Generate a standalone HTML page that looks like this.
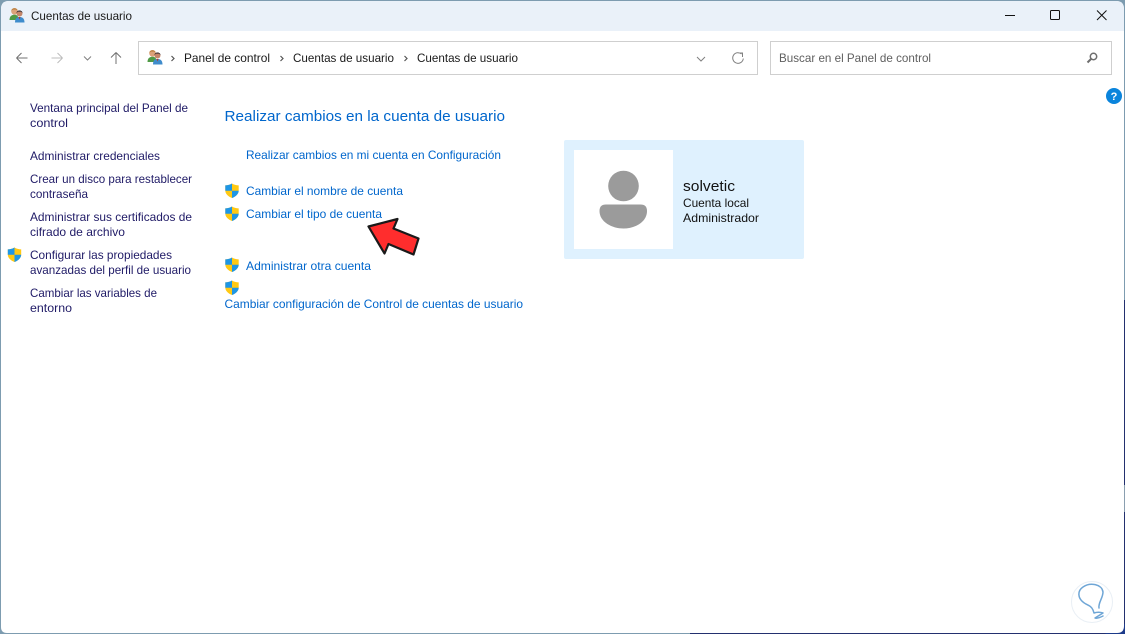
<!DOCTYPE html>
<html lang="es">
<head>
<meta charset="utf-8">
<title>Cuentas de usuario</title>
<style>
html,body{margin:0;padding:0;width:1125px;height:634px;overflow:hidden;background:#fff}
svg{display:block;position:absolute;left:0;top:0}
text{font-family:"Liberation Sans",sans-serif;font-size:12px}
.t{fill:#1a1a1a}
.s{fill:#1f1a66}
.l{fill:#0066cc}
</style>
</head>
<body>
<svg width="1125" height="634" viewBox="0 0 1125 634" xmlns="http://www.w3.org/2000/svg">
<defs>
<g id="shield">
<path d="M7.5 0.500 C5.500 1.800 3 2.400 0.800 2.400 V7.500 C0.800 11 3.800 13.500 7.500 15 C11.200 13.500 14.200 11 14.200 7.500 V2.400 C12 2.400 9.500 1.800 7.500 0.500Z" fill="#ffc914"/>
<path d="M7.500 0.500 C5.500 1.800 3 2.400 0.800 2.400 V7.700 H7.500Z" fill="#1e96e6"/>
<path d="M7.500 7.700 H14.200 C14 11 11.200 13.500 7.500 15Z" fill="#1e96e6"/>
</g>
<g id="users">
<circle cx="5.500" cy="4.300" r="3.300" fill="#dca27a"/>
<path d="M2.300 3.800 C2.500 0.400 8.500 0.400 8.700 3.800 L7 2.600 H4Z" fill="#b9803f"/>
<path d="M0.500 13 C0.500 9 3 7.800 5.500 7.800 C8 7.800 9.500 9 9.500 13Z" fill="#4f9a45"/>
<circle cx="10.500" cy="6.500" r="3" fill="#c4866a"/>
<path d="M7.500 6 C7.600 2.700 13.400 2.700 13.500 6 L12 4.600 H9Z" fill="#30282c"/>
<path d="M6 15.500 C6 11 8 10 10.500 10 C13 10 15.500 11 15.500 15.500Z" fill="#3f8ccc"/>
<path d="M9.500 10 L10.500 12.500 L11.500 10Z" fill="#b8392b"/>
</g>
</defs>

<!-- window frame -->
<rect x="0" y="0" width="1125" height="634" fill="#7d9cb0"/>
<rect x="1124" y="300" width="1" height="334" fill="#23306f"/>
<rect x="1124" y="485" width="1" height="27" fill="#8a9fb0"/>
<rect x="690" y="633" width="435" height="1" fill="#23306f"/>
<path d="M1115 624 H1125 V634 H1105 Z" fill="#1c3a8a"/>
<path d="M9 1 H1116 Q1124 1 1124 9 V626 Q1124 633 1117 633 H7 Q1 633 1 627 V9 Q1 1 9 1Z" fill="#fff"/>
<path d="M9 1 H1116 Q1124 1 1124 9 V31 H1 V9 Q1 1 9 1Z" fill="#eaf1f9"/>

<!-- title bar -->
<use href="#users" x="9" y="7"/>
<text x="31" y="20" class="t" textLength="101" lengthAdjust="spacingAndGlyphs">Cuentas de usuario</text>
<path d="M1005 15.500 H1015" stroke="#111" stroke-width="1" fill="none"/>
<rect x="1050.500" y="10.500" width="9" height="9" rx="1" stroke="#111" stroke-width="1" fill="none"/>
<path d="M1097 10.500 L1106.500 20 M1106.500 10.500 L1097 20" stroke="#111" stroke-width="1" fill="none"/>

<!-- nav -->
<path d="M16.500 58 H27.500 M16.500 58 L21.500 53 M16.500 58 L21.500 63" stroke="#707070" stroke-width="1" fill="none"/>
<path d="M62.500 58 H51.500 M62.500 58 L57.500 53 M62.500 58 L57.500 63" stroke="#bcbcbc" stroke-width="1" fill="none"/>
<path d="M84 56.500 L87.500 60 L91 56.500" stroke="#808080" stroke-width="1" fill="none"/>
<path d="M116 64 V52.500 M116 52.500 L111 57.500 M116 52.500 L121 57.500" stroke="#707070" stroke-width="1" fill="none"/>

<!-- address -->
<rect x="138.500" y="41.500" width="619" height="33" fill="#fff" stroke="#cfcfcf"/>
<use href="#users" x="147" y="49"/>
<path d="M171.500 56 L174 58.500 L171.500 61" stroke="#555" stroke-width="1.200" fill="none"/>
<text x="184" y="62" class="t" textLength="86" lengthAdjust="spacingAndGlyphs">Panel de control</text>
<path d="M280.500 56 L283 58.500 L280.500 61" stroke="#555" stroke-width="1.200" fill="none"/>
<text x="293" y="62" class="t" textLength="101" lengthAdjust="spacingAndGlyphs">Cuentas de usuario</text>
<path d="M404.500 56 L407 58.500 L404.500 61" stroke="#555" stroke-width="1.200" fill="none"/>
<text x="417" y="62" class="t" textLength="101" lengthAdjust="spacingAndGlyphs">Cuentas de usuario</text>
<path d="M697 57 L701 61 L705 57" stroke="#808080" fill="none"/>
<path d="M741.500 54 A5.300 5.300 0 1 0 743.300 58.500 M738.500 53 H742.500 V57" stroke="#808080" stroke-width="1" fill="none"/>

<!-- search -->
<rect x="770.500" y="41.500" width="341" height="33" fill="#fff" stroke="#cfcfcf"/>
<text x="779" y="62" fill="#5f5f5f" textLength="152" lengthAdjust="spacingAndGlyphs">Buscar en el Panel de control</text>
<circle cx="1093.500" cy="56.500" r="3.200" stroke="#6e6e6e" stroke-width="1.500" fill="none"/>
<path d="M1091 59 L1087.500 62.500" stroke="#6e6e6e" stroke-width="2" fill="none"/>

<!-- help -->
<circle cx="1114" cy="96" r="8" fill="#0a84dc"/>
<text x="1114" y="100" text-anchor="middle" fill="#fff" style="font-size:11px;font-weight:bold">?</text>

<!-- sidebar -->
<text x="30" y="112" class="s" textLength="158" lengthAdjust="spacingAndGlyphs">Ventana principal del Panel de</text>
<text x="30" y="127" class="s" textLength="38" lengthAdjust="spacingAndGlyphs">control</text>
<text x="30" y="160" class="s" textLength="130" lengthAdjust="spacingAndGlyphs">Administrar credenciales</text>
<text x="30" y="183" class="s" textLength="162" lengthAdjust="spacingAndGlyphs">Crear un disco para restablecer</text>
<text x="30" y="198" class="s" textLength="58" lengthAdjust="spacingAndGlyphs">contraseña</text>
<text x="30" y="221" class="s" textLength="162" lengthAdjust="spacingAndGlyphs">Administrar sus certificados de</text>
<text x="30" y="236" class="s" textLength="95" lengthAdjust="spacingAndGlyphs">cifrado de archivo</text>
<use href="#shield" x="7" y="247"/>
<text x="30" y="259" class="s" textLength="142" lengthAdjust="spacingAndGlyphs">Configurar las propiedades</text>
<text x="30" y="274" class="s" textLength="161" lengthAdjust="spacingAndGlyphs">avanzadas del perfil de usuario</text>
<text x="30" y="297" class="s" textLength="127" lengthAdjust="spacingAndGlyphs">Cambiar las variables de</text>
<text x="30" y="312" class="s" textLength="42" lengthAdjust="spacingAndGlyphs">entorno</text>

<!-- main -->
<text x="224.500" y="121" class="l" style="font-size:15px" textLength="280.500" lengthAdjust="spacingAndGlyphs">Realizar cambios en la cuenta de usuario</text>
<text x="246" y="159" class="l" textLength="255" lengthAdjust="spacingAndGlyphs">Realizar cambios en mi cuenta en Configuración</text>
<use href="#shield" x="224.500" y="183"/>
<text x="246" y="195" class="l" textLength="157" lengthAdjust="spacingAndGlyphs">Cambiar el nombre de cuenta</text>
<use href="#shield" x="224.500" y="206"/>
<text x="246" y="218" class="l" textLength="136" lengthAdjust="spacingAndGlyphs">Cambiar el tipo de cuenta</text>
<use href="#shield" x="224.500" y="257"/>
<text x="246" y="270" class="l" textLength="125" lengthAdjust="spacingAndGlyphs">Administrar otra cuenta</text>
<use href="#shield" x="224.500" y="280"/>
<text x="224.500" y="308" class="l" textLength="298.500" lengthAdjust="spacingAndGlyphs">Cambiar configuración de Control de cuentas de usuario</text>

<!-- arrow -->
<path d="M368.500 226.500 L397.500 219 L393.500 228.500 L418.500 238.500 L413.500 254.500 L388.500 244 L384.500 253.500 Z" fill="#ff2d2d" stroke="#1a1a1a" stroke-width="2.200" stroke-linejoin="round"/>

<!-- user card -->
<rect x="564" y="140" width="240" height="119" rx="2" fill="#dff1fe"/>
<rect x="574" y="150" width="99" height="99" fill="#fff"/>
<circle cx="623.500" cy="186" r="15.300" fill="#9b9b9b"/>
<path d="M606 204.500 H640.500 Q647 204.500 647 211 C647 222 635 228.500 623.500 228.500 C612 228.500 599.500 222 599.500 211 Q599.500 204.500 606 204.500Z" fill="#9b9b9b"/>
<text x="683" y="191" fill="#111" style="font-size:15px" textLength="52" lengthAdjust="spacingAndGlyphs">solvetic</text>
<text x="683" y="207" fill="#111" textLength="66" lengthAdjust="spacingAndGlyphs">Cuenta local</text>
<text x="683" y="222" fill="#111" textLength="76" lengthAdjust="spacingAndGlyphs">Administrador</text>

<!-- watermark -->
<circle cx="1092" cy="602" r="20.500" fill="#fff" stroke="#e9eff5" stroke-width="1"/>
<path d="M1099 608 C1098 603 1103 598 1103 592 C1102 584 1090 582 1083 587 C1077 591 1078 598 1083 602 C1086 605 1091 605 1093 610 L1094 613 C1097 612 1100 612 1103 613 L1095 618 C1097 619 1101 617 1103 616" fill="none" stroke="#6fa6d6" stroke-width="1.500" stroke-linecap="round" stroke-linejoin="round"/>
</svg>
</body>
</html>
